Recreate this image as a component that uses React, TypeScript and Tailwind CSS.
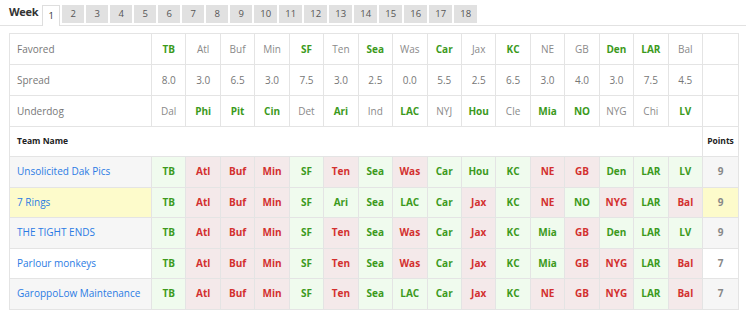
import React from 'react';

const favored = ['TB', 'Atl', 'Buf', 'Min', 'SF', 'Ten', 'Sea', 'Was', 'Car', 'Jax', 'KC', 'NE', 'GB', 'Den', 'LAR', 'Bal'];
const spreads = ['8.0', '3.0', '6.5', '3.0', '7.5', '3.0', '2.5', '0.0', '5.5', '2.5', '6.5', '3.0', '4.0', '3.0', '7.5', '4.5'];
const underdog = ['Dal', 'Phi', 'Pit', 'Cin', 'Det', 'Ari', 'Ind', 'LAC', 'NYJ', 'Hou', 'Cle', 'Mia', 'NO', 'NYG', 'Chi', 'LV'];
const winners = new Set(['TB', 'Phi', 'Pit', 'Cin', 'SF', 'Ari', 'Sea', 'LAC', 'Car', 'Hou', 'KC', 'Mia', 'NO', 'Den', 'LAR', 'LV']);

const entries = [
  { name: 'Unsolicited Dak Pics', picks: ['TB', 'Atl', 'Buf', 'Min', 'SF', 'Ten', 'Sea', 'Was', 'Car', 'Hou', 'KC', 'NE', 'GB', 'Den', 'LAR', 'LV'], points: 9, bg: 'bg-[#f6f6f6]' },
  { name: '7 Rings', picks: ['TB', 'Atl', 'Buf', 'Min', 'SF', 'Ari', 'Sea', 'LAC', 'Car', 'Jax', 'KC', 'NE', 'NO', 'NYG', 'LAR', 'Bal'], points: 9, bg: 'bg-[#fdfbcb]' },
  { name: 'THE TIGHT ENDS', picks: ['TB', 'Atl', 'Buf', 'Min', 'SF', 'Ten', 'Sea', 'Was', 'Car', 'Jax', 'KC', 'Mia', 'GB', 'Den', 'LAR', 'LV'], points: 9, bg: 'bg-[#f6f6f6]' },
  { name: 'Parlour monkeys', picks: ['TB', 'Atl', 'Buf', 'Min', 'SF', 'Ten', 'Sea', 'Was', 'Car', 'Jax', 'KC', 'Mia', 'GB', 'NYG', 'LAR', 'Bal'], points: 7, bg: 'bg-white' },
  { name: 'GaroppoLow Maintenance', picks: ['TB', 'Atl', 'Buf', 'Min', 'SF', 'Ten', 'Sea', 'LAC', 'Car', 'Jax', 'KC', 'NE', 'GB', 'NYG', 'LAR', 'Bal'], points: 7, bg: 'bg-[#f6f6f6]' },
];

const weeks = Array.from({ length: 18 }, (_, i) => i + 1);

const cell = 'border border-[#e4e4e4] text-center align-middle';

const HeaderTeam: React.FC<{ team: string }> = ({ team }) =>
  winners.has(team) ? (
    <span className="font-bold text-[#3c9a1c]">{team}</span>
  ) : (
    <span className="text-[#8a8a8a]">{team}</span>
  );

export default function App() {
  return (
    <div className="w-[746px] h-[316px] bg-white text-[10px] text-[#777]" style={{ fontFamily: '"Open Sans", "Liberation Sans", sans-serif' }}>
      {/* week tabs */}
      <div className="flex items-end h-[26px] border-b border-[#e2e2e2] pl-[9px]">
        <span className="text-[11px] font-bold text-[#333] mr-[4px] mb-[5px] tracking-[-0.3px]">Week</span>
        <div className="flex gap-[2px]">
          {weeks.map(w =>
            w === 1 ? (
              <div key={w} className="h-[21px] -mb-px w-[18px] flex items-center justify-center bg-white border border-b-0 border-[#dedede] text-[#333] text-[9.5px]">
                {w}
              </div>
            ) : (
              <div key={w} className={`h-[18px] mb-[2px] ${w < 10 ? 'w-[22px]' : 'w-[23px]'} flex items-center justify-center bg-[#e1e1e1] text-[#555] text-[9.5px]`}>
                {w}
              </div>
            )
          )}
        </div>
      </div>

      <table className="ml-[9px] mt-[7px] w-[729px] table-fixed border-collapse">
        <colgroup>
          <col className="w-[142px]" />
          {favored.map((_, i) => (
            <col key={i} className="w-[34.4375px]" />
          ))}
          <col className="w-[36px]" />
        </colgroup>
        <tbody>
          <tr className="h-[31px]">
            <td className="border border-[#e4e4e4] pl-[7px] text-[#777]">Favored</td>
            {favored.map(t => (
              <td key={t} className={cell}><HeaderTeam team={t} /></td>
            ))}
            <td className={cell}></td>
          </tr>
          <tr className="h-[31px]">
            <td className="border border-[#e4e4e4] pl-[7px] text-[#777]">Spread</td>
            {spreads.map((s, i) => (
              <td key={i} className={`${cell} text-[#777]`}>{s}</td>
            ))}
            <td className={cell}></td>
          </tr>
          <tr className="h-[31px]">
            <td className="border border-[#e4e4e4] pl-[7px] text-[#777]">Underdog</td>
            {underdog.map(t => (
              <td key={t} className={cell}><HeaderTeam team={t} /></td>
            ))}
            <td className={cell}></td>
          </tr>
          <tr className="h-[30px]">
            <td className="border-l border-y border-[#e4e4e4] pl-[7px] text-[8.5px] font-bold text-[#222]">Team Name</td>
            <td colSpan={16} className="border-y border-[#e4e4e4]"></td>
            <td className={`${cell} text-[8.5px] font-bold text-[#222]`}>Points</td>
          </tr>
          {entries.map(e => (
            <tr key={e.name} className="h-[30.5px]">
              <td className={`border border-[#e4e4e4] pl-[7px] text-[#2b7be4] ${e.bg}`}>{e.name}</td>
              {e.picks.map((p, i) => (
                <td
                  key={i}
                  className={`${cell} font-bold ${winners.has(p) ? 'bg-[#f0fbee] text-[#3c9a1c]' : 'bg-[#f4e9ea] text-[#d3302f]'}`}
                >
                  {p}
                </td>
              ))}
              <td className={`${cell} font-bold text-[#888] ${e.bg}`}>{e.points}</td>
            </tr>
          ))}
        </tbody>
      </table>
    </div>
  );
}
